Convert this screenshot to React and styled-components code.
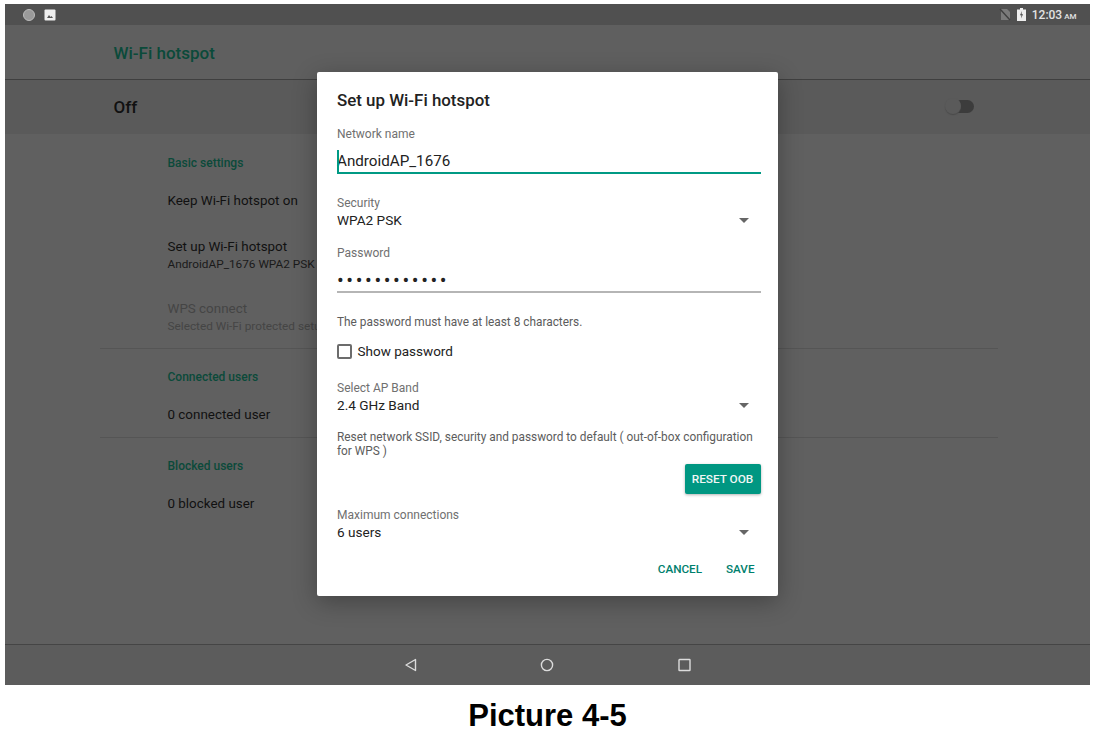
import React from "react";
import styled, { createGlobalStyle } from "styled-components";

const GlobalStyle = createGlobalStyle`
  html, body {
    margin: 0;
    padding: 0;
    background: #fff;
    font-family: Roboto, "Liberation Sans", sans-serif;
  }
`;

const Page = styled.div`
  width: 1093px;
  height: 732px;
  overflow: hidden;
  display: flex;
  flex-direction: column;
  align-items: center;
`;

const Screen = styled.div`
  position: relative;
  width: 1085px;
  height: 681px;
  margin: 4px 1px 0 2px;
  flex: none;
  display: flex;
  flex-direction: column;
  background: #606060;
  overflow: hidden;
`;

const StatusBar = styled.div`
  height: 21px;
  flex: none;
  background: #505050;
  display: flex;
  align-items: center;
  justify-content: space-between;
  padding: 0 13px 0 18px;
  color: #e4e4e4;
`;

const StatusGroup = styled.div`
  display: flex;
  align-items: center;
  gap: ${(p) => p.$gap}px;
`;

const Clock = styled.span`
  font-size: 12px;
  font-weight: 500;
  color: #e2e2e2;
  small {
    font-size: 8px;
    margin-left: 2px;
  }
`;

const AppBar = styled.div`
  height: 55px;
  box-sizing: border-box;
  flex: none;
  background: #5f5f5f;
  border-bottom: 1px solid #3f3f3f;
  display: flex;
  align-items: center;
  padding: 2px 0 0 109px;
  font-size: 17px;
  font-weight: 500;
  color: #0b4a3a;
`;

const SwitchRow = styled.div`
  height: 54px;
  flex: none;
  background: #5a5a5a;
  display: flex;
  align-items: center;
  justify-content: space-between;
  padding: 0 116px 0 109px;
  font-size: 17px;
  font-weight: 500;
  color: #111;
`;

const Toggle = styled.div`
  position: relative;
  width: 29px;
  height: 18px;
  margin-top: -2px;
  &::before {
    content: "";
    position: absolute;
    left: 4px;
    top: 3px;
    width: 25px;
    height: 13px;
    border-radius: 7px;
    background: #3c3c3c;
  }
  &::after {
    content: "";
    position: absolute;
    left: 0;
    top: 1px;
    width: 16px;
    height: 16px;
    border-radius: 50%;
    background: #5a5a5a;
    box-shadow: 0 1px 1px #4a4a4a;
  }
`;

const Settings = styled.div`
  flex: 1;
  padding: 0 92px 0 95px;
  background: #606060;
`;

const Section = styled.div`
  padding: 0 0 0 68px;
  height: ${(p) => p.$height}px;
  border-bottom: ${(p) => (p.$divider ? "1px solid #555" : "none")};
`;

const SectionTitle = styled.div`
  font-size: 12px;
  font-weight: 500;
  line-height: 16px;
  color: #0b4a3a;
  padding-top: ${(p) => p.$top}px;
  margin-bottom: 21px;
`;

const Item = styled.div`
  font-size: 13.4px;
  line-height: 18px;
  color: ${(p) => (p.$disabled ? "#454545" : "#111")};
  margin-bottom: ${(p) => p.$gap || 0}px;
`;

const ItemSub = styled.div`
  font-size: 11.8px;
  line-height: 16px;
  white-space: nowrap;
  color: ${(p) => (p.$disabled ? "#454545" : "#1a1a1a")};
  margin-bottom: ${(p) => p.$gap || 0}px;
`;

const NavBar = styled.div`
  height: 40px;
  flex: none;
  background: #5c5c5c;
  border-top: 1px solid #454545;
  display: flex;
  align-items: center;
  justify-content: center;
  gap: 123px;
  color: #dcdcdc;
`;

const Dialog = styled.div`
  position: absolute;
  left: 312px;
  top: 68px;
  width: 461px;
  height: 524px;
  box-sizing: border-box;
  background: #fff;
  border-radius: 2px;
  box-shadow: 0 6px 24px rgba(0, 0, 0, 0.3);
  padding: 18px 17px 0 20.5px;
  color: #212121;
`;

const DialogTitle = styled.div`
  font-size: 16.9px;
  font-weight: 500;
  line-height: 20px;
  color: #222;
  margin-bottom: 16px;
`;

const Label = styled.div`
  font-size: 12px;
  line-height: 16px;
  color: #707070;
  margin-top: ${(p) => p.$top || 0}px;
`;

const TextInput = styled.div`
  position: relative;
  height: ${(p) => p.$height}px;
  box-sizing: border-box;
  margin-left: -0.5px;
  border-bottom: ${(p) => (p.$active ? "2px solid #009a84" : "2px solid #b5b5b5")};
  font-size: ${(p) => (p.$dots ? "20px" : "15.2px")};
  letter-spacing: ${(p) => (p.$dots ? "2.6px" : "0")};
  color: #222;
  display: flex;
  align-items: flex-end;
  line-height: 22px;
  padding-left: 0.5px;
`;

const Cursor = styled.span`
  position: absolute;
  left: 0;
  top: 8px;
  width: 2px;
  height: 22px;
  background: #009a84;
`;

const SelectRow = styled.div`
  height: 18px;
  display: flex;
  align-items: center;
  justify-content: space-between;
  padding-right: 12px;
  font-size: 13.6px;
  color: #222;
  margin-bottom: ${(p) => p.$gap || 0}px;
`;

const Caret = styled.span`
  width: 0;
  height: 0;
  border-left: 5px solid transparent;
  border-right: 5px solid transparent;
  border-top: 5px solid #666;
`;

const Helper = styled.div`
  font-size: 11.85px;
  line-height: 14px;
  color: #5c5c5c;
  margin-top: ${(p) => p.$top || 0}px;
`;

const CheckRow = styled.div`
  display: flex;
  align-items: center;
  gap: 6px;
  height: 20px;
  margin: 12px 0 19px -0.5px;
  font-size: 13.5px;
  color: #222;
`;

const CheckBox = styled.span`
  width: 11px;
  height: 11px;
  border: 2px solid #6c6c6c;
  border-radius: 2px;
`;

const ButtonRow = styled.div`
  display: flex;
  justify-content: flex-end;
  margin: 6px 0 13px;
`;

const RaisedButton = styled.div`
  width: 76px;
  height: 30px;
  background: #009782;
  border-radius: 2px;
  box-shadow: 0 1px 3px rgba(0, 0, 0, 0.3);
  color: #f1f6f5;
  font-size: 11.8px;
  font-weight: 500;
  display: flex;
  align-items: center;
  justify-content: center;
`;

const Actions = styled.div`
  display: flex;
  justify-content: flex-end;
  gap: 24px;
  padding-right: 6px;
  margin-top: 20px;
  font-size: 11.7px;
  font-weight: 500;
  line-height: 16px;
  color: #00806d;
`;

const Caption = styled.div`
  font-family: "Liberation Sans", Arial, sans-serif;
  font-size: 31px;
  font-weight: 700;
  line-height: 36px;
  color: #000;
  margin-top: 13px;
  margin-left: 2px;
`;

export default function App() {
  return (
    <Page>
      <GlobalStyle />
      <Screen>
        <StatusBar>
          <StatusGroup $gap={9}>
            <svg width="12" height="12" viewBox="0 0 12 12">
              <circle cx="6" cy="6" r="5.5" fill="#9a9a9a" stroke="#bbb" />
            </svg>
            <svg width="12" height="12" viewBox="0 0 12 12">
              <rect x="0.5" y="0.5" width="11" height="11" rx="1" fill="#eee" />
              <path d="M3 9l2-3 1.5 2 1-1 1.5 2z" fill="#555" />
            </svg>
          </StatusGroup>
          <StatusGroup $gap={6}>
            <svg width="12" height="13" viewBox="0 0 12 13">
              <path d="M2 1h6l3 3v8H2z" fill="#7a7a7a" />
              <path d="M1 1l10 11" stroke="#3f3f3f" strokeWidth="1.4" />
            </svg>
            <svg width="9" height="13" viewBox="0 0 9 13">
              <path d="M3 0h3v1.5h3V13H0V1.5h3z" fill="#eee" />
              <path d="M5 3L3 7.2h1.5L4 10.5l2-4.2H4.5z" fill="#444" />
            </svg>
            <Clock>
              12:03<small>AM</small>
            </Clock>
          </StatusGroup>
        </StatusBar>
        <AppBar>Wi-Fi hotspot</AppBar>
        <SwitchRow>
          Off
          <Toggle />
        </SwitchRow>
        <Settings>
          <Section $height={214} $divider>
            <SectionTitle $top={21}>Basic settings</SectionTitle>
            <Item $gap={28}>Keep Wi-Fi hotspot on</Item>
            <Item>Set up Wi-Fi hotspot</Item>
            <ItemSub $gap={28}>AndroidAP_1676 WPA2 PSK</ItemSub>
            <Item $disabled>WPS connect</Item>
            <ItemSub $disabled>Selected Wi-Fi protected setup</ItemSub>
          </Section>
          <Section $height={88} $divider>
            <SectionTitle $top={20}>Connected users</SectionTitle>
            <Item>0 connected user</Item>
          </Section>
          <Section $height={89}>
            <SectionTitle $top={20}>Blocked users</SectionTitle>
            <Item>0 blocked user</Item>
          </Section>
        </Settings>
        <NavBar>
          <svg width="14" height="14" viewBox="0 0 14 14" fill="none" stroke="currentColor" strokeWidth="1.4">
            <path d="M12.5 1.5v11L3 7z" strokeLinejoin="round" />
          </svg>
          <svg width="14" height="14" viewBox="0 0 14 14" fill="none" stroke="currentColor" strokeWidth="1.4">
            <circle cx="7" cy="7" r="5.6" />
          </svg>
          <svg width="14" height="14" viewBox="0 0 14 14" fill="none" stroke="currentColor" strokeWidth="1.4">
            <rect x="2" y="1.5" width="11" height="11" rx="0.5" />
          </svg>
        </NavBar>
        <Dialog>
          <DialogTitle>Set up Wi-Fi hotspot</DialogTitle>
          <Label>Network name</Label>
          <TextInput $active $height={32}>
            <Cursor />
            AndroidAP_1676
          </TextInput>
          <Label $top={21}>Security</Label>
          <SelectRow $gap={16}>
            WPA2 PSK
            <Caret />
          </SelectRow>
          <Label>Password</Label>
          <TextInput $dots $height={32}>
            ••••••••••••
          </TextInput>
          <Helper $top={22}>The password must have at least 8 characters.</Helper>
          <CheckRow>
            <CheckBox />
            Show password
          </CheckRow>
          <Label>Select AP Band</Label>
          <SelectRow>
            2.4 GHz Band
            <Caret />
          </SelectRow>
          <Helper $top={16}>
            Reset network SSID, security and password to default ( out-of-box configuration
            <br />
            for WPS )
          </Helper>
          <ButtonRow>
            <RaisedButton>RESET OOB</RaisedButton>
          </ButtonRow>
          <Label>Maximum connections</Label>
          <SelectRow>
            6 users
            <Caret />
          </SelectRow>
          <Actions>
            <span>CANCEL</span>
            <span>SAVE</span>
          </Actions>
        </Dialog>
      </Screen>
      <Caption>Picture 4-5</Caption>
    </Page>
  );
}
